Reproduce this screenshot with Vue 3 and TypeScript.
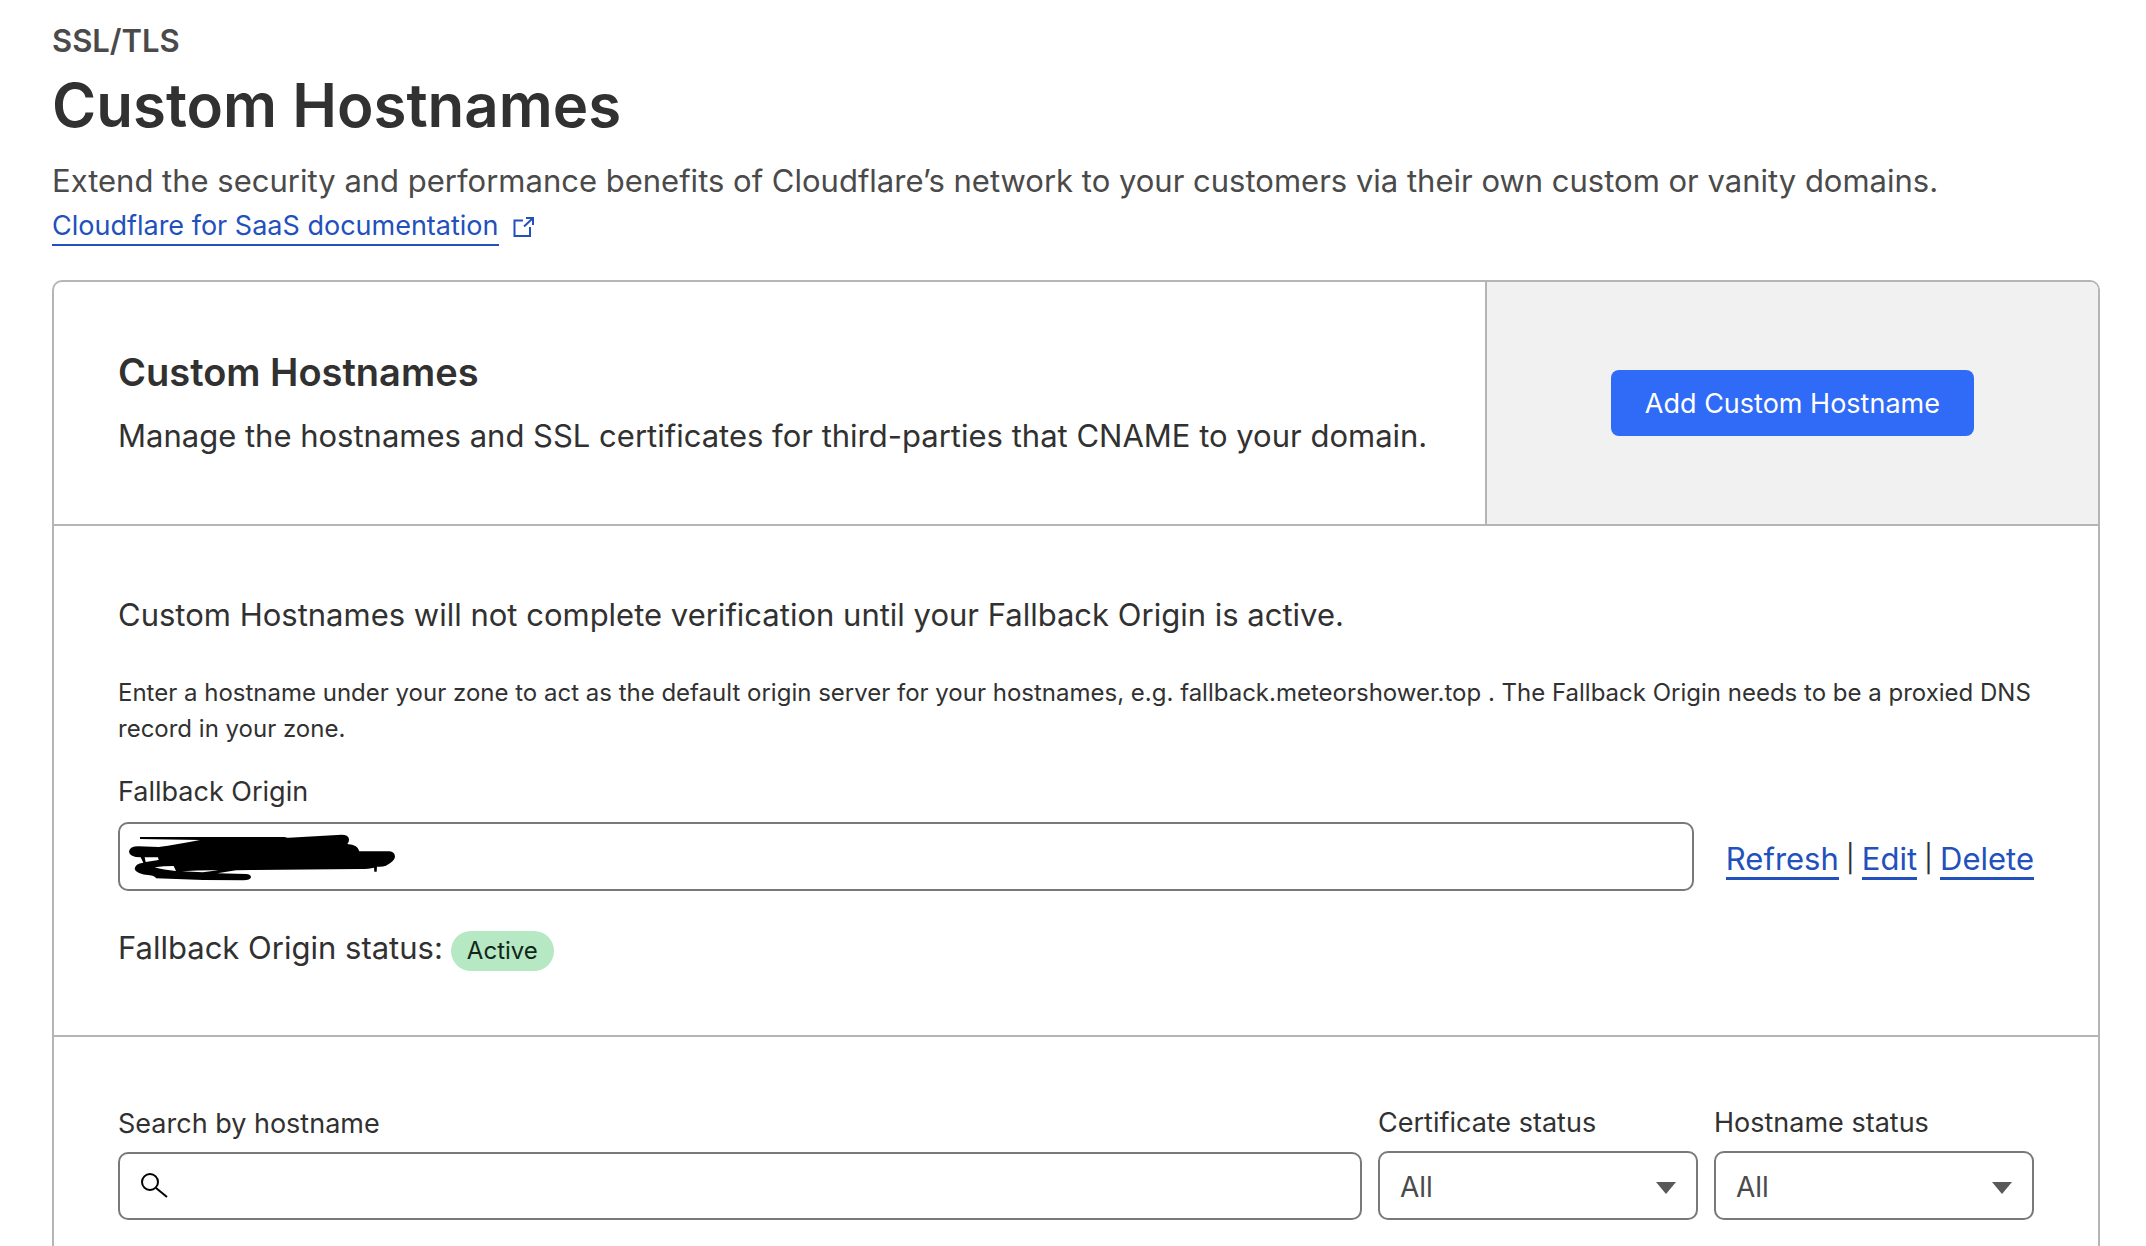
<script setup lang="ts">
import { ref } from 'vue'

interface Filter {
  id: string
  label: string
}

const filters: Filter[] = [
  { id: 'certificate-status', label: 'Certificate status' },
  { id: 'hostname-status', label: 'Hostname status' },
]
const selected = ref<Record<string, string>>({
  'certificate-status': 'All',
  'hostname-status': 'All',
})
const actions: string[] = ['Refresh', 'Edit', 'Delete']
const search = ref('')
</script>

<template>
  <main class="page">
    <header class="intro">
      <p class="eyebrow">SSL/TLS</p>
      <h1>Custom Hostnames</h1>
      <p class="lead">Extend the security and performance benefits of Cloudflare’s network to your customers via their own custom or vanity domains.</p>
      <div class="docs">
        <a class="docs-link" href="#">Cloudflare for SaaS documentation</a>
        <svg class="docs-icon" viewBox="0 0 22 22" width="22" height="22" fill="none" stroke="currentColor" stroke-width="2" aria-hidden="true">
          <path d="M10 4.500H1.500V20H17V11" />
          <path d="M13 2H20V9M20 2L11 10.500" />
        </svg>
      </div>
    </header>

    <div class="card">
      <section class="card-head">
        <div class="card-title">
          <h2>Custom Hostnames</h2>
          <p>Manage the hostnames and SSL certificates for third-parties that CNAME to your domain.</p>
        </div>
        <div class="card-action">
          <button class="primary" type="button">Add Custom Hostname</button>
        </div>
      </section>

      <section class="fallback">
        <p class="notice">Custom Hostnames will not complete verification until your Fallback Origin is active.</p>
        <p class="help">Enter a hostname under your zone to act as the default origin server for your hostnames, e.g. fallback.meteorshower.top . The Fallback Origin needs to be a proxied DNS record in your zone.</p>
        <label class="label" for="fallback-origin">Fallback Origin</label>
        <div class="origin-row">
          <div class="origin-field">
            <input id="fallback-origin" class="control" type="text" readonly />
            <svg class="redaction" viewBox="84 217 804 150" width="268" height="50" aria-hidden="true">
              <path d="M120 232L554 232Q560 235 566 234L712 226Q745 222 747 238Q748 246 742 253Q775 256 778 275L868 275Q884 276 885 291Q884 304 858 318Q848 322 831 321L830 336H823L822 324Q808 328 780 328L455 331L408 332L352 341L438 343Q453 344 453 353Q451 362 430 362L310 361L168 356Q166 350 150 347Q107 343 104 328Q105 312 130 309L122 293Q88 292 87 276Q89 260 115 260L176 262Q230 255 300 241L120 238ZM134 293L137 307L176 301L174 293ZM164 323Q190 331 228 334L221 319Q190 319 164 323ZM246 335L308 338L356 332Q300 331 246 335Z" fill="#000" fill-rule="evenodd" />
            </svg>
          </div>
          <nav class="actions">
            <template v-for="(action, i) in actions" :key="action">
              <span v-if="i > 0">|</span>
              <a href="#">{{ action }}</a>
            </template>
          </nav>
        </div>
        <div class="status">
          <span>Fallback Origin status:</span>
          <span class="badge">Active</span>
        </div>
      </section>

      <section class="filters">
        <div class="search">
          <label class="label" for="search">Search by hostname</label>
          <div class="control search-box">
            <svg viewBox="0 0 28 28" width="28" height="28" fill="none" stroke="#000" stroke-width="2" aria-hidden="true">
              <circle cx="10" cy="10" r="8" />
              <path d="M16 16L27 25" />
            </svg>
            <input id="search" v-model="search" type="text" />
          </div>
        </div>
        <div v-for="filter in filters" :key="filter.id" class="filter">
          <label class="label" :for="filter.id">{{ filter.label }}</label>
          <div class="select-wrap">
            <select :id="filter.id" v-model="selected[filter.id]" class="control">
              <option>All</option>
              <option>Active</option>
              <option>Pending</option>
            </select>
            <svg class="caret" viewBox="0 0 20 12" width="20" height="12" aria-hidden="true">
              <path d="M0 0H20L10 12Z" fill="#595959" />
            </svg>
          </div>
        </div>
      </section>
    </div>
  </main>
</template>

<style>
body {
  margin: 0;
  background: #fff;
}
</style>

<style scoped>
.page,
.page * {
  box-sizing: border-box;
}
.page {
  padding: 21px 46px 0 52px;
  font-family: Inter, "Liberation Sans", sans-serif;
  font-size: 31px;
  color: #313131;
}
h1,
h2,
p {
  margin: 0;
}
.eyebrow {
  line-height: 40px;
  font-weight: 600;
  color: #4a4a4a;
}
h1 {
  margin-top: 4px;
  font-size: 60px;
  line-height: 80px;
  font-weight: 600;
}
.lead {
  margin-top: 12px;
  line-height: 48px;
  color: #4a4a4a;
}
.docs {
  display: flex;
  align-items: center;
  gap: 14px;
  margin-top: 3px;
  color: #2250bc;
}
.docs-link {
  font-size: 27px;
  line-height: 36px;
  border-bottom: 2px solid;
}
a {
  color: #2250bc;
  text-decoration: none;
}
.card {
  margin-top: 34px;
  border: 2px solid #b5b5b5;
  border-bottom: 0;
  border-radius: 10px 10px 0 0;
  overflow: hidden;
}
.card-head {
  display: flex;
  border-bottom: 2px solid #b5b5b5;
}
.card-title {
  flex: 0 0 70%;
  padding: 66px 0 64px 64px;
}
h2 {
  font-size: 38px;
  line-height: 48px;
  font-weight: 600;
}
.card-title p {
  margin-top: 16px;
  line-height: 48px;
}
.card-action {
  flex: 1;
  display: flex;
  align-items: center;
  justify-content: center;
  background: #f1f1f1;
  border-left: 2px solid #b5b5b5;
}
.primary {
  height: 66px;
  padding: 0 34px;
  border: 0;
  border-radius: 8px;
  background: #2f6bf7;
  color: #fff;
  font: inherit;
  font-size: 27px;
}
.fallback {
  padding: 65px 64px 64px;
  border-bottom: 2px solid #b5b5b5;
}
.notice {
  line-height: 48px;
}
.help {
  margin-top: 36px;
  font-size: 24px;
  line-height: 36px;
}
.label {
  display: block;
  font-size: 27px;
  line-height: 40px;
}
.help + .label {
  margin-top: 25px;
}
.control {
  display: block;
  width: 100%;
  height: 69px;
  border: 2px solid #797979;
  border-radius: 10px;
  background: #fff;
  color: #4a4a4a;
  font-family: inherit;
  font-size: 28px;
}
.origin-row {
  display: flex;
  align-items: center;
  gap: 32px;
  margin-top: 10px;
}
.origin-field {
  position: relative;
  flex: 1;
}
.origin-field input {
  padding: 0 20px;
}
.redaction {
  position: absolute;
  left: 10px;
  top: 10px;
}
.actions {
  display: flex;
  gap: 7px;
  margin-top: 8px;
  line-height: 36px;
}
.actions span {
  font-size: 27px;
}
.actions a {
  border-bottom: 3px solid;
}
.status {
  display: flex;
  align-items: baseline;
  gap: 8px;
  margin-top: 37px;
  line-height: 40px;
}
.badge {
  padding: 0 16px;
  border-radius: 20px;
  background: #b6e8c3;
  color: #12261a;
  font-size: 24px;
}
.filters {
  display: flex;
  align-items: flex-end;
  gap: 16px;
  padding: 66px 64px 64px;
}
.filters .label {
  margin-bottom: 8px;
}
.search {
  flex: 1;
}
.search-box {
  display: flex;
  align-items: center;
  gap: 12px;
  height: 68px;
  padding: 0 20px;
}
.search-box input {
  flex: 1;
  min-width: 0;
  border: 0;
  outline: 0;
  background: transparent;
  font: inherit;
}
.filter {
  flex: 0 0 320px;
}
.select-wrap {
  position: relative;
}
select {
  appearance: none;
  padding: 2px 20px 0;
}
.caret {
  position: absolute;
  right: 22px;
  top: 31px;
  pointer-events: none;
}
</style>
